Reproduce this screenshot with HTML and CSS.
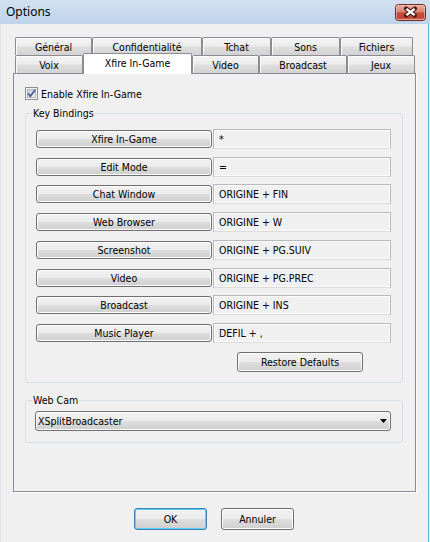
FILE: index.html
```html
<!DOCTYPE html>
<html lang="fr">
<head>
<meta charset="utf-8">
<title>Options</title>
<link rel="stylesheet" href="styles.css">
</head>
<body>
<div class="window">
  <div class="titlebar">
    <span class="title">Options</span>
    <button class="close" aria-label="Fermer">
      <svg width="31" height="17" viewBox="0 0 31 17">
        <defs>
          <linearGradient id="clg" x1="0" y1="0" x2="0" y2="1">
            <stop offset="0" stop-color="#eab0a3"/>
            <stop offset="0.45" stop-color="#d98574"/>
            <stop offset="0.52" stop-color="#c54d3c"/>
            <stop offset="0.85" stop-color="#c24838"/>
            <stop offset="1" stop-color="#e08572"/>
          </linearGradient>
        </defs>
        <rect x="0.5" y="0.5" width="30" height="16" rx="3" fill="url(#clg)" stroke="#6e2a22"/>
        <rect x="1.5" y="1.5" width="28" height="14" rx="2" fill="none" stroke="#f5cfc6" stroke-opacity="0.55"/>
        <path d="M11 4.5 L20 11.5 M20 4.5 L11 11.5" stroke="#4b1b15" stroke-width="4.2" stroke-linecap="round"/>
        <path d="M11.4 4.9 L19.6 11.1 M19.6 4.9 L11.4 11.1" stroke="#ffffff" stroke-width="2.3"/>
      </svg>
    </button>
  </div>
  <div class="client">
    <div class="tabs">
      <div class="tabrow">
        <div class="tab t-general">Général</div>
        <div class="tab t-conf">Confidentialité</div>
        <div class="tab t-tchat">Tchat</div>
        <div class="tab t-sons">Sons</div>
        <div class="tab t-fichiers">Fichiers</div>
      </div>
      <div class="tabrow">
        <div class="tab t-voix">Voix</div>
        <div class="tab t-xfire selected">Xfire In-Game</div>
        <div class="tab t-video">Video</div>
        <div class="tab t-broadcast">Broadcast</div>
        <div class="tab t-jeux">Jeux</div>
      </div>
    </div>
    <div class="panel">
      <label class="check">
        <span class="box">
          <svg width="13" height="13" viewBox="0 0 13 13">
            <defs>
              <linearGradient id="cbg" x1="0" y1="0" x2="1" y2="1">
                <stop offset="0" stop-color="#c9ced6"/>
                <stop offset="1" stop-color="#f7f7f7"/>
              </linearGradient>
            </defs>
            <rect x="0.5" y="0.5" width="12" height="12" fill="#f5f5f5" stroke="#8e8f8f"/>
            <rect x="2.5" y="2.5" width="8" height="8" fill="url(#cbg)" stroke="#b2b7bf"/>
            <path d="M3 6.3 L5.3 9.2 L10.2 2.8" fill="none" stroke="#4b5d96" stroke-width="1.8"/>
          </svg>
        </span>
        <span class="check-label">Enable Xfire In-Game</span>
      </label>

      <fieldset class="group keys">
        <legend>Key Bindings</legend>
        <div class="bindings">
          <div class="binding"><button class="btn key">Xfire In-Game</button><div class="field">*</div></div>
          <div class="binding"><button class="btn key">Edit Mode</button><div class="field">=</div></div>
          <div class="binding"><button class="btn key">Chat Window</button><div class="field">ORIGINE + FIN</div></div>
          <div class="binding"><button class="btn key">Web Browser</button><div class="field">ORIGINE + W</div></div>
          <div class="binding"><button class="btn key">Screenshot</button><div class="field">ORIGINE + PG.SUIV</div></div>
          <div class="binding"><button class="btn key">Video</button><div class="field">ORIGINE + PG.PREC</div></div>
          <div class="binding"><button class="btn key">Broadcast</button><div class="field">ORIGINE + INS</div></div>
          <div class="binding"><button class="btn key">Music Player</button><div class="field">DEFIL + ,</div></div>
        </div>
        <button class="btn restore">Restore Defaults</button>
      </fieldset>

      <fieldset class="group cam">
        <legend>Web Cam</legend>
        <div class="combo">
          <span class="combo-text">XSplitBroadcaster</span>
          <svg class="combo-arrow" width="7" height="4" viewBox="0 0 7 4"><path d="M0 0 H7 L3.5 4 Z" fill="#000"/></svg>
        </div>
      </fieldset>
    </div>
    <div class="actions">
      <button class="btn dlg default">OK</button>
      <button class="btn dlg">Annuler</button>
    </div>
  </div>
</div>
</body>
</html>
```

FILE: styles.css
```css
* {
  box-sizing: border-box;
}

html,
body {
  margin: 0;
  padding: 0;
}

body {
  width: 430px;
  height: 542px;
  overflow: hidden;
  background: #f0f0f0;
  font-family: "DejaVu Sans Condensed", "DejaVu Sans", sans-serif;
  font-size: 10.5px;
  color: #000;
}

.window {
  width: 430px;
  height: 542px;
  display: flex;
  flex-direction: column;
  background: #f0f0f0;
  box-shadow: inset -1px 0 #eef1f4, inset -2px 0 #5db5e6, inset 1px 0 #dfe6ee;
}

/* title bar */
.titlebar {
  height: 24px;
  flex: none;
  display: flex;
  align-items: flex-start;
  padding: 0 4px 0 6px;
  background: linear-gradient(#d2e1f1, #bdd3ea);
}

.title {
  font-family: "Noto Sans", sans-serif;
  font-size: 12px;
  line-height: 24px;
  color: #000;
}

.close {
  margin: 4px 0 0 auto;
  width: 31px;
  height: 17px;
  padding: 0;
  border: 0;
  background: none;
  display: block;
}

.close svg {
  display: block;
}

/* client */
.client {
  flex: 1;
  display: flex;
  flex-direction: column;
  padding: 13px 14px 0 13px;
}

.tabs {
  padding-left: 2px;
}

.tabrow {
  display: flex;
  height: 18px;
}

.tab {
  height: 18px;
  flex: none;
  border: 1px solid #898c95;
  border-bottom: none;
  border-radius: 2px 2px 0 0;
  background: linear-gradient(#f4f4f4 0%, #ececec 45%, #dedede 55%, #d2d2d2 100%);
  box-shadow: inset 1px 1px 0 #fbfbfb;
  display: flex;
  align-items: center;
  justify-content: center;
  padding-top: 1px;
  white-space: nowrap;
}

.tab.selected {
  position: relative;
  height: 21px;
  margin-top: -2px;
  background: #fff;
  box-shadow: none;
  padding: 0 0 2px;
}

.t-general { width: 77px; }
.t-conf { width: 110px; }
.t-tchat { width: 69px; }
.t-sons { width: 69px; }
.t-fichiers { width: 73px; }

.t-voix { width: 68px; }
.t-xfire { width: 109px; }
.t-video { width: 67px; }
.t-broadcast { width: 88px; }
.t-jeux { width: 68px; }

.panel {
  height: 419px;
  flex: none;
  border: 1px solid #898c95;
  background: #f0f0f0;
  box-shadow: 1px 1px 0 #ffffff;
  padding: 13px 0 0 11px;
}

/* checkbox */
.check {
  display: flex;
  align-items: center;
  height: 13px;
}

.box {
  width: 13px;
  height: 13px;
  display: block;
}

.box svg {
  display: block;
}

.check-label {
  margin-left: 3px;
}

/* group boxes */
.group {
  margin: 7px 0 0;
  width: 378px;
  min-width: 0;
  padding: 9px 0 10px 0;
  border: 1px solid #d5dfe5;
  border-radius: 3px;
}

.group legend {
  margin-left: 6px;
  padding: 0 1px;
  height: 13px;
  line-height: 13px;
}

.bindings {
  display: flex;
  flex-direction: column;
  gap: 7.71px;
  margin-left: 10px;
}

.binding {
  display: flex;
  align-items: center;
  gap: 1px;
  height: 20px;
}

/* buttons */
.btn {
  font: inherit;
  color: #000;
  border: 1px solid #707070;
  border-radius: 3px;
  background: linear-gradient(#f2f2f2 0%, #ebebeb 48%, #dddddd 52%, #cfcfcf 100%);
  box-shadow: inset 0 0 0 1px #fcfcfc;
  padding: 0;
  display: flex;
  align-items: center;
  justify-content: center;
  white-space: nowrap;
}

.btn.key {
  width: 176px;
  height: 18px;
}

.field {
  width: 178px;
  height: 20px;
  border: 1px solid #b7b9bd;
  border-bottom-color: #d9dbde;
  box-shadow: inset 0 0 0 1px #fbfbfb;
  background: #f0f0f0;
  padding-left: 5px;
  display: flex;
  align-items: center;
  white-space: nowrap;
}

.btn.restore {
  margin: 9px 0 0 211px;
  width: 126px;
  height: 20px;
}

.group.cam {
  margin-top: 11px;
  padding: 4px 0 11px 0;
}

.combo {
  margin-left: 9px;
  width: 356px;
  height: 20px;
  border: 1px solid #707070;
  border-radius: 3px;
  background: linear-gradient(#f2f2f2 0%, #ebebeb 48%, #dddddd 52%, #cfcfcf 100%);
  box-shadow: inset 0 0 0 1px #fcfcfc;
  display: flex;
  align-items: center;
  padding: 0 3px 0 2px;
}

.combo-arrow {
  margin-left: auto;
  display: block;
}

/* dialog buttons */
.actions {
  display: flex;
  justify-content: center;
  gap: 14px;
  margin-top: 16px;
  padding-right: 1px;
}

.btn.dlg {
  width: 73px;
  height: 22px;
}

.btn.default {
  border-color: #3c7fb1;
  box-shadow: inset 0 0 0 1px #5dd0f6;
}
```
